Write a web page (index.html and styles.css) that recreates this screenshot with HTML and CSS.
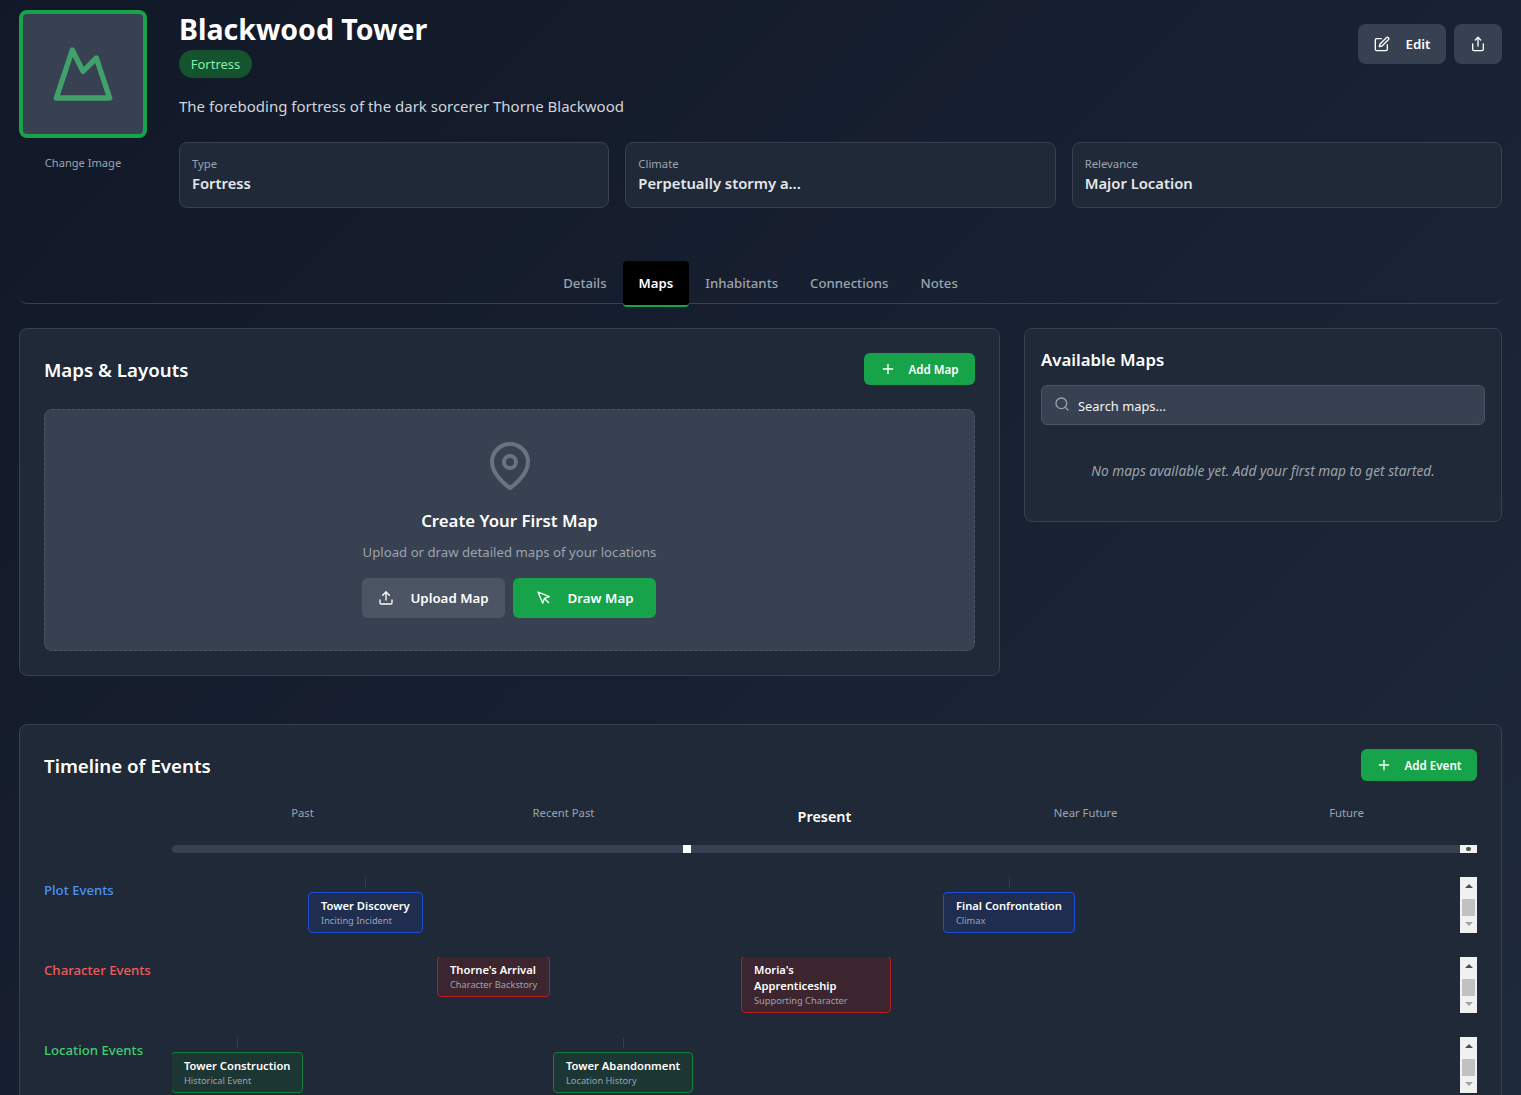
FILE: index.html
```html
<!DOCTYPE html>
<html lang="en">
<head>
  <meta charset="UTF-8" />
  <title>Blackwood Tower</title>
  <link rel="stylesheet" href="styles.css">
</head>
<body>
  <header class="loc-header">
    <div class="loc-image">
      <div class="image-box">
        <svg width="64" height="64" viewBox="0 0 24 24" fill="none" stroke="currentColor" stroke-width="2" stroke-linecap="round" stroke-linejoin="round"><path d="m8 3 4 8 5-5 5 15H2L8 3z"/></svg>
      </div>
      <span class="change-image">Change Image</span>
    </div>
    <div class="loc-info">
      <div class="loc-top">
        <div>
          <h1>Blackwood Tower</h1>
          <span class="pill">Fortress</span>
          <p class="loc-desc">The foreboding fortress of the dark sorcerer Thorne Blackwood</p>
        </div>
        <div class="loc-actions">
          <button class="btn btn-gray btn-lg" type="button">
            <svg width="16" height="16" viewBox="0 0 24 24" fill="none" stroke="currentColor" stroke-width="2" stroke-linecap="round" stroke-linejoin="round"><path d="M11 4H4a2 2 0 0 0-2 2v14a2 2 0 0 0 2 2h14a2 2 0 0 0 2-2v-7"/><path d="M18.5 2.5a2.121 2.121 0 0 1 3 3L12 15l-4 1 1-4 9.5-9.5z"/></svg>
            Edit
          </button>
          <button class="btn btn-gray btn-icon" type="button" aria-label="Share">
            <svg width="16" height="16" viewBox="0 0 24 24" fill="none" stroke="currentColor" stroke-width="2" stroke-linecap="round" stroke-linejoin="round"><path d="M4 12v8a2 2 0 0 0 2 2h12a2 2 0 0 0 2-2v-8"/><polyline points="16 6 12 2 8 6"/><line x1="12" y1="2" x2="12" y2="15"/></svg>
          </button>
        </div>
      </div>
      <div class="stats">
        <div class="stat"><span class="stat-label">Type</span><span class="stat-value">Fortress</span></div>
        <div class="stat"><span class="stat-label">Climate</span><span class="stat-value">Perpetually stormy a...</span></div>
        <div class="stat"><span class="stat-label">Relevance</span><span class="stat-value">Major Location</span></div>
      </div>
    </div>
  </header>

  <nav class="tabs">
    <a class="tab">Details</a>
    <a class="tab active">Maps</a>
    <a class="tab">Inhabitants</a>
    <a class="tab">Connections</a>
    <a class="tab">Notes</a>
  </nav>

  <div class="maps-grid">
    <section class="card card-main">
      <div class="card-head">
        <h2>Maps &amp; Layouts</h2>
        <button class="btn btn-green btn-sm btn-add-map" type="button">
          <svg width="16" height="16" viewBox="0 0 24 24" fill="none" stroke="currentColor" stroke-width="2" stroke-linecap="round" stroke-linejoin="round"><line x1="12" y1="5" x2="12" y2="19"/><line x1="5" y1="12" x2="19" y2="12"/></svg>
          Add Map
        </button>
      </div>
      <div class="map-empty">
        <svg class="pin" width="48" height="48" viewBox="0 0 24 24" fill="none" stroke="currentColor" stroke-width="2" stroke-linecap="round" stroke-linejoin="round"><path d="M21 10c0 7-9 13-9 13s-9-6-9-13a9 9 0 0 1 18 0z"/><circle cx="12" cy="10" r="3"/></svg>
        <h3>Create Your First Map</h3>
        <p>Upload or draw detailed maps of your locations</p>
        <div class="map-empty-actions">
          <button class="btn btn-mid btn-wide" type="button">
            <svg width="16" height="16" viewBox="0 0 24 24" fill="none" stroke="currentColor" stroke-width="2" stroke-linecap="round" stroke-linejoin="round"><path d="M21 15v4a2 2 0 0 1-2 2H5a2 2 0 0 1-2-2v-4"/><polyline points="17 8 12 3 7 8"/><line x1="12" y1="3" x2="12" y2="15"/></svg>
            Upload Map
          </button>
          <button class="btn btn-green btn-wide" type="button">
            <svg width="16" height="16" viewBox="0 0 24 24" fill="none" stroke="currentColor" stroke-width="2" stroke-linecap="round" stroke-linejoin="round"><path d="M3 3l7.07 16.97 2.51-7.39 7.39-2.51L3 3z"/><path d="M13 13l6 6"/></svg>
            Draw Map
          </button>
        </div>
      </div>
    </section>

    <aside class="card card-side">
      <h3 class="side-title">Available Maps</h3>
      <div class="search">
        <svg width="16" height="16" viewBox="0 0 24 24" fill="none" stroke="currentColor" stroke-width="2" stroke-linecap="round" stroke-linejoin="round"><circle cx="11" cy="11" r="8"/><line x1="21" y1="21" x2="16.65" y2="16.65"/></svg>
        <input type="text" placeholder="Search maps..." />
      </div>
      <p class="side-empty">No maps available yet. Add your first map to get started.</p>
    </aside>
  </div>

  <section class="card timeline">
    <div class="card-head">
      <h2>Timeline of Events</h2>
      <button class="btn btn-green btn-sm btn-add-event" type="button">
        <svg width="16" height="16" viewBox="0 0 24 24" fill="none" stroke="currentColor" stroke-width="2" stroke-linecap="round" stroke-linejoin="round"><line x1="12" y1="5" x2="12" y2="19"/><line x1="5" y1="12" x2="19" y2="12"/></svg>
        Add Event
      </button>
    </div>

    <div class="scale">
      <span>Past</span>
      <span>Recent Past</span>
      <span class="now">Present</span>
      <span>Near Future</span>
      <span>Future</span>
    </div>
    <div class="track-row">
      <div class="track"><i class="track-mark"></i></div>
      <div class="mini-scroll"><i></i></div>
    </div>

    <div class="lane-row">
      <div class="lane-label plot">Plot Events</div>
      <div class="lane">
        <div class="event ev-blue" style="left:136px;top:15px"><b>Tower Discovery</b><small>Inciting Incident</small></div>
        <div class="event ev-blue" style="left:771px;top:15px"><b>Final Confrontation</b><small>Climax</small></div>
      </div>
      <div class="scrollbar"><i class="up"></i><i class="thumb"></i><i class="down"></i></div>
    </div>

    <div class="lane-row">
      <div class="lane-label char">Character Events</div>
      <div class="lane">
        <div class="event ev-red" style="left:265px;top:-1px"><b>Thorne's Arrival</b><small>Character Backstory</small></div>
        <div class="event ev-red" style="left:569px;top:-1px"><b>Moria's Apprenticeship</b><small>Supporting Character</small></div>
      </div>
      <div class="scrollbar"><i class="up"></i><i class="thumb"></i><i class="down"></i></div>
    </div>

    <div class="lane-row">
      <div class="lane-label loc">Location Events</div>
      <div class="lane">
        <div class="event ev-green" style="left:-1px;top:15px"><b>Tower Construction</b><small>Historical Event</small></div>
        <div class="event ev-green" style="left:381px;top:15px"><b>Tower Abandonment</b><small>Location History</small></div>
      </div>
      <div class="scrollbar"><i class="up"></i><i class="thumb"></i><i class="down"></i></div>
    </div>
  </section>
</body>
</html>
```

FILE: styles.css
```css
html, body {
  height: 100%;
  overflow: hidden;
}
body {
  margin: 0;
  padding: 10px 19px 0;
  box-sizing: border-box;
  font-family: "Noto Sans", "Open Sans", sans-serif;
  color: #fff;
  background: linear-gradient(135deg, #111827, #1e293b);
}
h1, h2, h3, p {
  margin: 0;
}
svg {
  flex: none;
  display: block;
}

/* header */
.loc-header {
  display: flex;
  gap: 32px;
  margin-bottom: 53px;
}
.loc-image {
  width: 128px;
  flex: none;
  text-align: center;
}
.image-box {
  width: 128px;
  height: 128px;
  box-sizing: border-box;
  border: 4px solid #16a34a;
  border-radius: 8px;
  background: #374151;
  color: #42a06d;
  display: flex;
  align-items: center;
  justify-content: center;
}
.change-image {
  display: block;
  margin-top: 17px;
  font-size: 11.1px;
  line-height: 16px;
  color: #9ca3af;
}
.loc-info {
  flex: 1;
  min-width: 0;
}
.loc-top {
  display: flex;
  justify-content: space-between;
}
h1 {
  margin-top: 1px;
  font-size: 28.5px;
  line-height: 36px;
  font-weight: 700;
}
.pill {
  display: inline-block;
  margin-top: 3px;
  width: 73px;
  box-sizing: border-box;
  padding: 4px 0;
  text-align: center;
  border-radius: 14px;
  background: #14532d;
  color: #86efac;
  font-size: 13px;
  line-height: 20px;
  vertical-align: top;
}
.loc-desc {
  margin-top: 16px;
  font-size: 15px;
  line-height: 24px;
  color: #d1d5db;
}
.loc-actions {
  display: flex;
  gap: 8px;
  margin-top: 14px;
}
.stats {
  display: flex;
  gap: 16px;
  margin-top: 24px;
}
.stat {
  flex: 1;
  height: 66px;
  box-sizing: border-box;
  padding: 12px;
  background: #1f2937;
  border: 1px solid #374151;
  border-radius: 8px;
}
.stat-label {
  display: block;
  font-size: 11.3px;
  line-height: 16px;
  color: #9ca3af;
  padding-top: 1px;
}
.stat-value {
  display: block;
  font-size: 14.8px;
  line-height: 22px;
  font-weight: 600;
  color: #e5e7eb;
}

/* buttons */
.btn {
  display: inline-flex;
  align-items: center;
  justify-content: center;
  border: 0;
  border-radius: 6px;
  color: #fff;
  font-family: inherit;
  font-size: 13.3px;
  font-weight: 600;
  gap: 16px;
  height: 40px;
  padding: 0 16px;
}
.btn-lg {
  width: 88px;
  border-radius: 8px;
}
.btn-icon {
  width: 48px;
  padding: 0;
  border-radius: 8px;
}
.btn-sm {
  height: 32px;
  font-size: 11.6px;
  gap: 12px;
  padding: 0;
}
.btn-add-map {
  width: 111px;
}
.btn-add-event {
  width: 116px;
}
.btn-wide {
  width: 143px;
  padding: 0;
}
.btn-gray {
  background: #374151;
}
.btn-mid {
  background: #4b5563;
}
.btn-green {
  background: #16a34a;
}

/* tabs */
.tabs {
  display: flex;
  justify-content: center;
  height: 42px;
  border-bottom: 1px solid #374151;
  border-radius: 0 0 8px 8px;
  margin-bottom: 24px;
}
.tab {
  height: 46px;
  box-sizing: border-box;
  padding: 12px 16px;
  border-bottom: 2px solid transparent;
  border-radius: 4px;
  font-size: 13.2px;
  line-height: 20px;
  font-weight: 500;
  color: #9ca3af;
}
.tab.active {
  background: #000;
  color: #fff;
  font-weight: 600;
  border-bottom-color: #16a34a;
}

/* cards */
.card {
  background: #1f2937;
  border: 1px solid #374151;
  border-radius: 8px;
  box-sizing: border-box;
}
.maps-grid {
  display: grid;
  grid-template-columns: 981px 1fr;
  gap: 24px;
  align-items: start;
  margin-bottom: 48px;
}
.card-main {
  padding: 24px;
}
.card-head {
  display: flex;
  justify-content: space-between;
  align-items: center;
  margin-bottom: 24px;
}
h2 {
  font-size: 18.7px;
  line-height: 28px;
  font-weight: 600;
  padding-top: 2px;
}
.map-empty {
  padding: 32px;
  background: #374151;
  border: 1px dashed #4b5563;
  border-radius: 8px;
  text-align: center;
}
.pin {
  margin: 0 auto;
  color: #6b7280;
}
.map-empty h3 {
  margin-top: 17px;
  font-size: 16.8px;
  line-height: 28px;
  font-weight: 600;
}
.map-empty p {
  margin-top: 7px;
  font-size: 13.2px;
  line-height: 20px;
  color: #9ca3af;
}
.map-empty-actions {
  display: flex;
  justify-content: center;
  gap: 8px;
  margin-top: 16px;
  padding-right: 1px;
}
.card-side {
  padding: 16px;
}
.side-title {
  font-size: 16.8px;
  line-height: 28px;
  font-weight: 600;
  padding-top: 1px;
  margin-bottom: 11px;
}
.search {
  display: flex;
  align-items: center;
  gap: 8px;
  height: 40px;
  box-sizing: border-box;
  padding: 0 12px;
  background: #374151;
  border: 1px solid #4b5563;
  border-radius: 6px;
  color: #9ca3af;
}
.search svg {
  margin-top: -3px;
}
.search input {
  flex: 1;
  min-width: 0;
  border: 0;
  padding: 1px 0 0;
  background: transparent;
  font-family: inherit;
  font-size: 12.9px;
  color: #fff;
  outline: none;
}
.search input::placeholder {
  color: #f3f4f6;
  opacity: 1;
}
.side-empty {
  margin-top: 36px;
  margin-bottom: 24px;
  font-size: 13.7px;
  line-height: 20px;
  font-style: italic;
  text-align: center;
  color: #9ca3af;
}

/* timeline */
.timeline {
  padding: 24px;
}
.scale {
  display: flex;
  margin-left: 128px;
  margin-bottom: 16px;
  align-items: flex-start;
}
.scale span {
  flex: 1;
  text-align: center;
  font-size: 11.3px;
  line-height: 16px;
  color: #9ca3af;
}
.scale .now {
  font-size: 14.4px;
  line-height: 24px;
  font-weight: 600;
  color: #fff;
}
.track-row {
  display: flex;
  margin-left: 128px;
  height: 8px;
  margin-bottom: 24px;
}
.track {
  flex: 1;
  position: relative;
  background: #374151;
  border-radius: 4px 0 0 4px;
}
.track-mark {
  position: absolute;
  left: 40%;
  top: 0;
  width: 8px;
  height: 8px;
  margin-left: -4px;
  background: #fff;
}
.mini-scroll {
  width: 17px;
  background: #f1f1f1;
  display: flex;
  justify-content: center;
  align-items: center;
}
.mini-scroll i {
  width: 5px;
  height: 4px;
  border-radius: 2px;
  background: #505050;
}
.lane-row {
  display: flex;
  height: 56px;
  margin-bottom: 24px;
}
.lane-label {
  width: 128px;
  flex: none;
  padding-top: 3px;
  font-size: 13.2px;
  line-height: 20px;
  font-weight: 500;
}
.plot { color: #4f93f7; }
.char { color: #f25b5b; }
.loc { color: #3fd071; }
.lane {
  flex: 1;
  position: relative;
  overflow: hidden;
}
.event {
  position: absolute;
  max-width: 150px;
  box-sizing: border-box;
  padding: 4px 12px;
  border: 1px solid;
  border-radius: 4px;
}
.event::before {
  content: "";
  position: absolute;
  left: 50%;
  top: -16px;
  width: 1px;
  height: 11px;
  background: currentColor;
}
.event b {
  display: block;
  font-size: 11.2px;
  line-height: 16px;
  font-weight: 600;
  color: #fff;
  padding-top: 1px;
  margin-bottom: -1px;
}
.event small {
  display: block;
  font-size: 9.25px;
  line-height: 15px;
  color: #9ca3af;
}
.ev-blue {
  background: #1f2e50;
  border-color: #1d4ed8;
  color: #1e3a8a;
}
.ev-red {
  background: #3c252f;
  border-color: #b91c1c;
  color: #7f1d1d;
}
.ev-green {
  background: #1c3634;
  border-color: #15803d;
  color: #14532d;
}

/* drawn like the browser's default scrollbar */
.scrollbar {
  width: 17px;
  flex: none;
  position: relative;
  background: #f1f1f1;
}
.scrollbar i {
  position: absolute;
  display: block;
}
.scrollbar .up {
  left: 5px;
  top: 7px;
  border: 4px solid transparent;
  border-top: 0;
  border-bottom-color: #505050;
}
.scrollbar .thumb {
  left: 2px;
  top: 22px;
  width: 13px;
  height: 17px;
  background: #c1c1c1;
}
.scrollbar .down {
  left: 5px;
  bottom: 7px;
  border: 4px solid transparent;
  border-bottom: 0;
  border-top-color: #a3a3a3;
}
```
